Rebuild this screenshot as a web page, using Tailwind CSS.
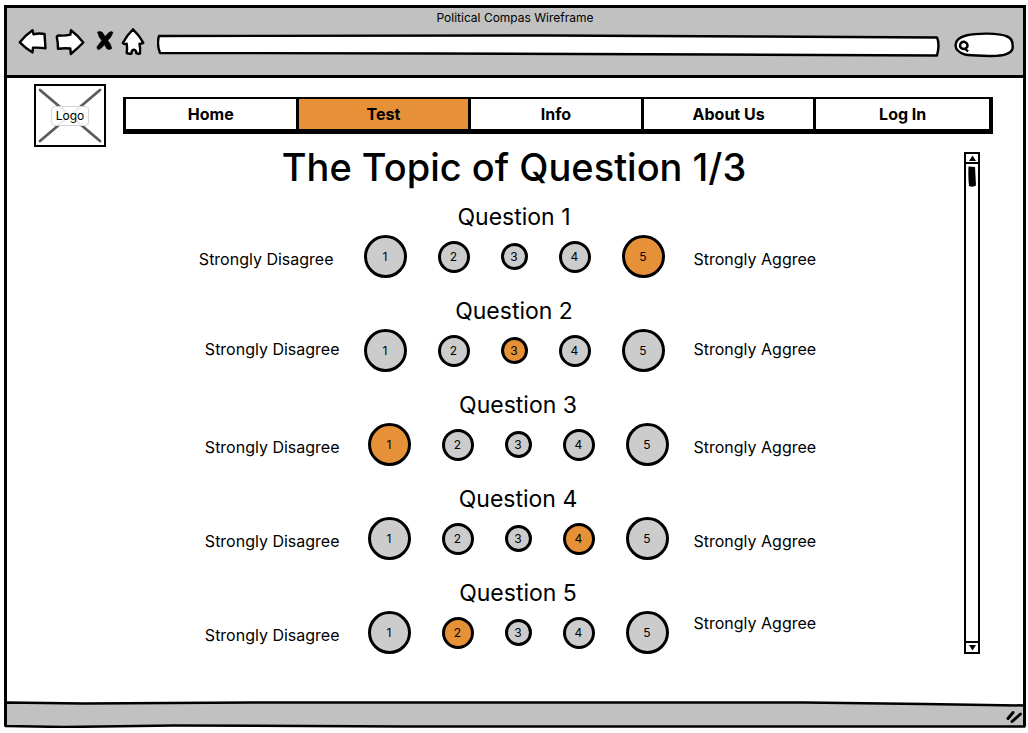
<!DOCTYPE html>
<html lang="en">
<head>
<meta charset="utf-8">
<meta name="viewport" content="width=device-width, initial-scale=1">
<title>Political Compas Wireframe</title>
<script src="https://cdn.jsdelivr.net/npm/@tailwindcss/browser@4"></script>
</head>
<body class="bg-white font-[Inter,'Liberation_Sans',sans-serif] text-black">
<div class="flex min-h-screen flex-col pt-[5px] pr-[2px] pb-[5px] pl-[4px]">
<div class="flex flex-1 flex-col border-[3px] border-b-0 border-black">

  <header class="border-b-[3px] border-black bg-[#c1c1c1] pt-[2px] pb-[17px]">
    <p class="text-center text-[12px] leading-4">Political Compas Wireframe</p>
    <div class="flex h-8 items-start pr-[9px] pl-[11px]">
      <button type="button" aria-label="Back" class="mr-[7px]"><svg class="block h-[30px] w-[30px]" viewBox="18 25 30 30" fill="#fff" stroke="#000" stroke-width="2.4" stroke-linejoin="round"><path d="M19.8 41.3 Q25 34.500 32.500 29.200 L33.500 33.300 Q39 32 44.500 33 Q45 40 45.500 47.200 Q39 46.300 33 46.700 L32.500 51.500 Q26 47.500 19.800 41.300Z"/></svg></button>
      <button type="button" aria-label="Forward" class="mr-[10px]"><svg class="block h-[30px] w-[30px]" viewBox="55 25 30 30" fill="#fff" stroke="#000" stroke-width="2.4" stroke-linejoin="round"><path d="M56.800 36 Q57 34.600 59 34.500 Q65 35 70.300 33.700 L71 29.200 Q78 34.500 83.300 41.500 Q78 47 70.800 53 L70.300 47.500 Q64 46.800 58 47.800 Q58 41.500 56.800 36Z"/></svg></button>
      <button type="button" aria-label="Stop" class="mr-[5px]"><svg class="block h-[30px] w-[20px]" viewBox="95 25 20 30" fill="#000" stroke="#000" stroke-width="0.6"><path d="M97.500 31 Q100.500 29.800 102.500 31.500 L105 35.500 L109.500 31 Q111.500 30 113 31.500 Q111.500 36 107.800 39.500 Q111 43 111.800 47.500 Q109.500 49 107 48 L104.500 43.800 Q101.500 47.500 98.500 48.800 Q96.500 48 97 45.800 L101.800 39.500 Q98.500 36 97.500 31Z"/></svg></button>
      <button type="button" aria-label="Home page" class="mr-[11px]"><svg class="block h-[30px] w-[26px]" viewBox="120 25 26 30" fill="#fff" stroke="#000" stroke-width="2.4" stroke-linejoin="round"><path d="M133 28.300 Q139.500 34.500 143.300 41.800 Q141.500 43 139.500 42.800 Q140.500 47.500 140 52.500 Q138 53 136.300 52.200 Q136.500 49.500 134.500 48.800 Q131.500 48.500 131.500 52.500 Q129 53 126.700 52.200 Q127.500 47 126.700 42.800 Q124.500 43.300 122.800 42 Q127 34 133 28.300Z"/></svg></button>
      <div class="relative mt-[8px] mr-[14px] h-[23px] flex-1">
        <svg class="absolute inset-0 h-full w-full" viewBox="0 0 784 23" preserveAspectRatio="none" fill="#fff" stroke="#000" stroke-width="2.4" stroke-linejoin="round" aria-hidden="true"><path vector-effect="non-scaling-stroke" d="M2 2 L390 1.500 L600 2.500 L781 3.500 Q784 10 781 21.500 L560 20.500 L280 19.500 L3 19 Q-0.500 10 2 2Z"/></svg>
        <input type="text" aria-label="Address" class="relative block h-full w-full bg-transparent px-2 text-[12px] outline-none">
      </div>
      <div class="relative mt-[6px] h-[26px] w-[60px]">
        <svg class="absolute inset-0 h-full w-full" viewBox="954 32 60 26" fill="none" stroke="#000" stroke-width="2.400" aria-hidden="true"><path fill="#fff" d="M966 35.500 C978 32.800 998 33 1006 36 C1013 38 1013 45 1012.500 49 C1010 55 1000 56 992 56 C984 55.500 972 56 965 54.500 C952 50.500 952.500 39 966 35.500Z"/><path d="M960 45.500 Q960.500 41.500 964.500 41.800 Q968 43 967.500 46.500 Q966 49.500 962.500 48.800 Q959.800 47.500 960 45.500Z M964.500 48 L968 51.500"/></svg>
        <input type="search" aria-label="Search" class="relative block h-full w-full bg-transparent pr-2 pl-4 text-[12px] outline-none">
      </div>
    </div>
  </header>

  <main class="flex flex-1 flex-col bg-white">
    <div class="flex items-start pt-[6px] pr-[30px] pl-[27px]">
      <a href="#" class="relative grid h-[63px] w-[72px] place-items-center border-2 border-black">
        <svg class="absolute inset-0 h-full w-full" viewBox="0 0 68 59" fill="none" stroke="#5c5c5c" stroke-width="2.800" stroke-linecap="round" preserveAspectRatio="none" aria-hidden="true"><path d="M4 4 L64 55 M64 4 L4 55"/></svg>
        <span class="relative rounded-[4px] border border-gray-300 bg-white/90 px-[4px] text-[12px] leading-[18px]">Logo</span>
      </a>
      <nav class="mt-[13px] ml-[17px] flex-1 border-t-2 border-r-4 border-b-[5px] border-l-[3px] border-black text-[16px] leading-[30px] font-bold">
        <ul class="grid grid-cols-5 divide-x-[3px] divide-black text-center">
          <li><a href="#" class="block">Home</a></li>
          <li><a href="#" aria-current="page" class="block bg-[#e69138]">Test</a></li>
          <li><a href="#" class="block">Info</a></li>
          <li><a href="#" class="block">About Us</a></li>
          <li><a href="#" class="block">Log In</a></li>
        </ul>
      </nav>
    </div>

    <div class="flex pr-[43px] pl-[57px]">
      <form class="flex-1">
        <h1 class="text-center text-[38px] leading-10 font-medium">The Topic of Question 1/3</h1>
        <div id="questions" class="mt-[14px] grid gap-[17px]"></div>
      </form>
      <div class="mt-[5px] flex w-[16px] flex-col border-2 border-black">
        <button type="button" aria-label="Scroll up" class="border-b-2 border-black"><svg class="block h-[8px] w-full" viewBox="0 0 12 8"><path d="M3 7 L6.500 1.500 L10 7Z"/></svg></button>
        <div class="flex-1 px-[2px] pt-[2px]"><svg class="block h-[21px] w-[8px]" viewBox="0 0 8 21"><path d="M0.500 0.500 L7 1 Q7.500 10 8 19.500 Q5 21.500 1 20 Q0 10 0.500 0.500Z"/></svg></div>
        <button type="button" aria-label="Scroll down" class="border-t-2 border-black"><svg class="block h-[9px] w-full" viewBox="0 0 12 9"><path d="M3 2 L10 2 L6.500 7.500Z"/></svg></button>
      </div>
    </div>
  </main>
</div>

<footer class="relative -mt-[4px] h-[30px]">
  <svg class="absolute inset-0 h-full w-full" viewBox="0 0 1022 30" preserveAspectRatio="none" fill="#c1c1c1" stroke="#000" stroke-width="2.500" stroke-linejoin="round" aria-hidden="true"><path vector-effect="non-scaling-stroke" d="M1.500 4.500 L80 5.500 L250 4.500 L800 4.500 L920 6 L1020.500 7.500 L1020.500 28.500 L400 28.500 L170 27.500 L60 29 L1.500 28Z"/><path vector-effect="non-scaling-stroke" stroke-width="3" d="M1.500 0 L1.500 28 M1020.500 0 L1020.500 28"/></svg>
  <svg class="absolute right-[3px] bottom-[4px] h-[14px] w-[18px]" viewBox="0 0 18 14" fill="none" stroke="#000" stroke-width="3" stroke-linecap="round" aria-hidden="true"><path d="M3 8.500 L8 2.500 M7 11.500 L15.500 4"/></svg>
</footer>
</div>

<script>
const sizes = ['size-[43px]', 'size-[32px]', 'size-[27px]', 'size-[32px]', 'size-[43px]'];
const right = 'pt-1 pl-[29px]';
const rightNear = 'pt-1 pl-[25px]';
const rows = [
  { pick: 5, shift: '', l: 'pt-1 pr-[30px]', r: right },
  { pick: 3, shift: '', l: 'pb-1 pr-[24px]', r: 'pb-1 pl-[29px]' },
  { pick: 1, shift: 'pl-2', l: 'pt-1 pr-[28px]', r: rightNear },
  { pick: 4, shift: 'pl-2', l: 'pt-1 pr-[28px]', r: rightNear },
  { pick: 2, shift: 'pl-2', l: 'pt-1 pr-[28px]', r: 'pb-5 pl-[25px]' },
];
document.getElementById('questions').innerHTML = rows.map((q, i) => `
  <fieldset class="${q.shift}" aria-labelledby="q${i + 1}">
    <h2 id="q${i + 1}" class="text-center text-[23px] leading-8">Question ${i + 1}</h2>
    <div class="mt-[2px] grid h-[43px] grid-cols-[1fr_auto_1fr] items-center text-[16px] leading-5">
      <span class="text-right ${q.l}">Strongly Disagree</span>
      <div class="flex items-center gap-[31px]">
        ${sizes.map((s, n) => `<label class="grid place-items-center text-[12px] leading-4"><input type="radio" name="question${i + 1}" value="${n + 1}" ${q.pick === n + 1 ? 'checked' : ''} class="col-start-1 row-start-1 appearance-none rounded-full border-[3px] border-black bg-[#cccccc] checked:bg-[#e69138] ${s}"><span class="pointer-events-none z-10 col-start-1 row-start-1">${n + 1}</span></label>`).join('')}
      </div>
      <span class="${q.r}">Strongly Aggree</span>
    </div>
  </fieldset>`).join('');
</script>
</body>
</html>
